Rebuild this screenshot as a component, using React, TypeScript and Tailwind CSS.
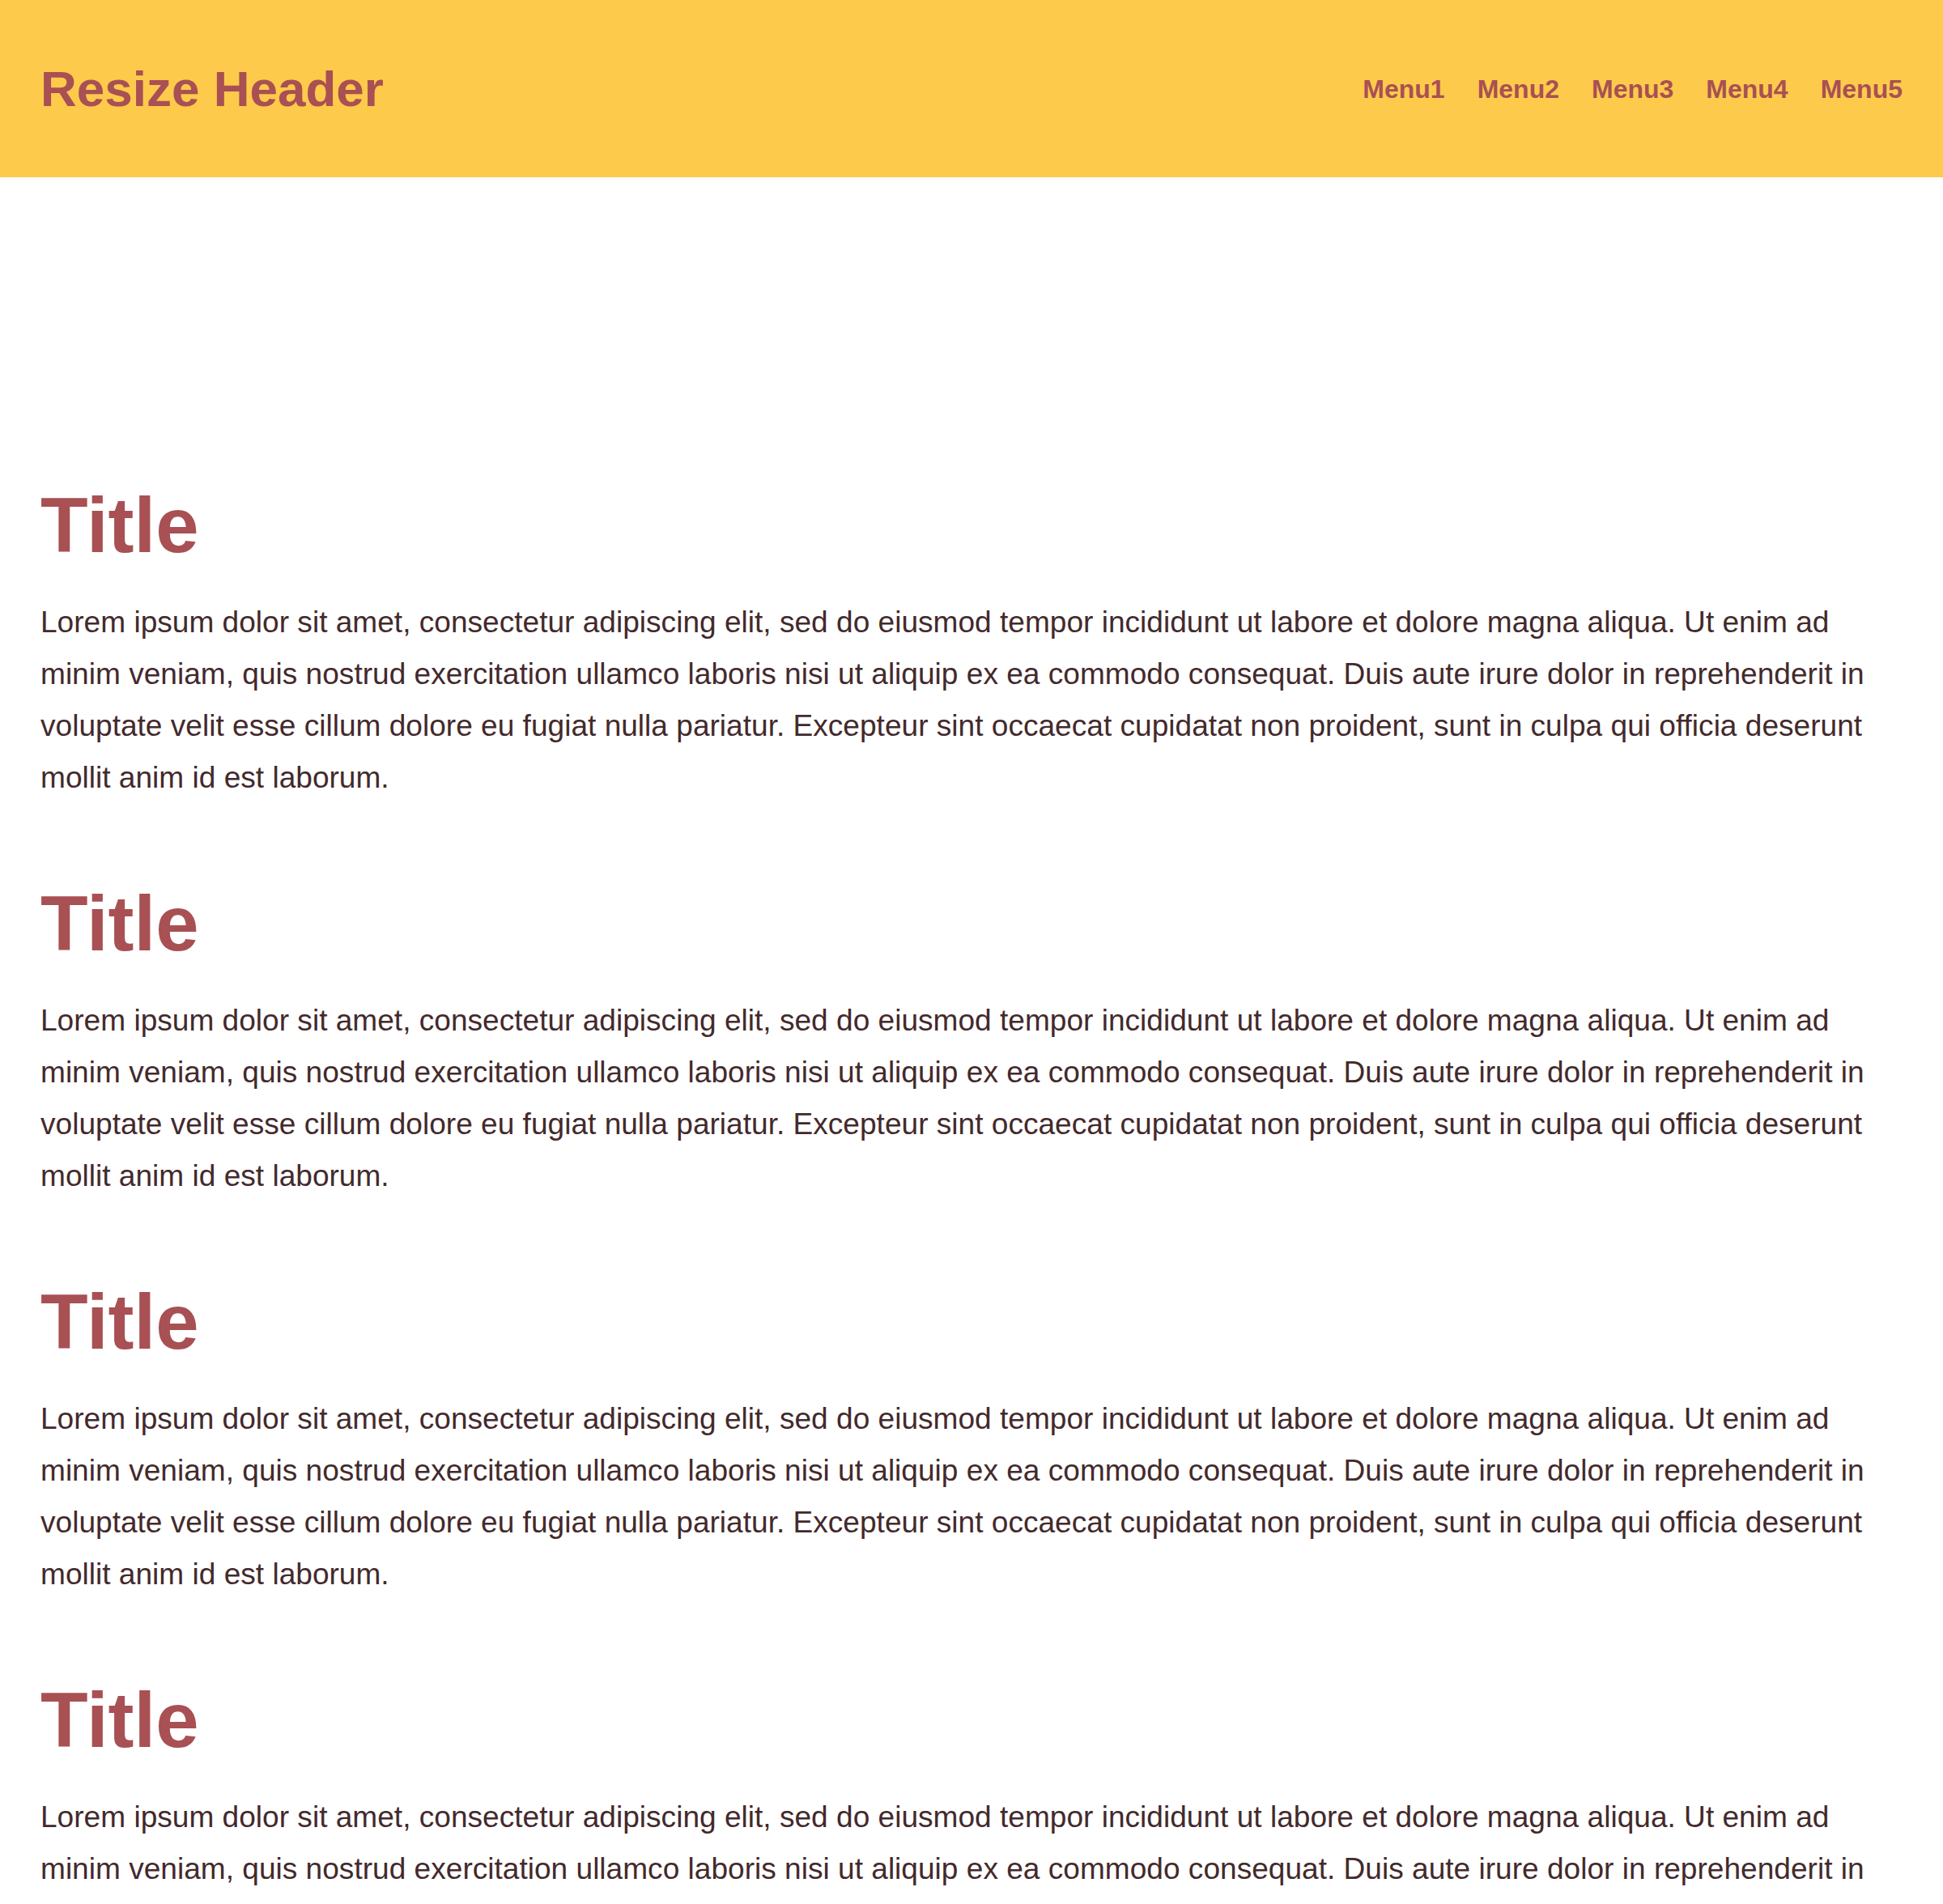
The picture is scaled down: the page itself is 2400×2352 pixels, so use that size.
const menus = ['Menu1', 'Menu2', 'Menu3', 'Menu4', 'Menu5']

const lorem =
  'Lorem ipsum dolor sit amet, consectetur adipiscing elit, sed do eiusmod tempor incididunt ut labore et dolore magna aliqua. Ut enim ad minim veniam, quis nostrud exercitation ullamco laboris nisi ut aliquip ex ea commodo consequat. Duis aute irure dolor in reprehenderit in voluptate velit esse cillum dolore eu fugiat nulla pariatur. Excepteur sint occaecat cupidatat non proident, sunt in culpa qui officia deserunt mollit anim id est laborum.'

function Header() {
  return (
    <header className="h-[219px] bg-[#fdca4b] px-[50px] flex items-center justify-between">
      <h1 className="text-[62px] leading-none font-bold text-[#a85053]">Resize Header</h1>
      <nav className="flex gap-[40px]">
        {menus.map((m) => (
          <a key={m} className="text-[32px] leading-none font-bold text-[#a85053]">
            {m}
          </a>
        ))}
      </nav>
    </header>
  )
}

function Section() {
  return (
    <section>
      <h2 className="text-[96px] leading-none font-bold text-[#a85053] mb-[39px]">Title</h2>
      <p className="text-[37.1px] leading-[64px] text-[#432a2c]">{lorem}</p>
    </section>
  )
}

export default function App() {
  return (
    <div className="min-h-screen bg-white font-['Liberation_Sans',Arial,sans-serif]">
      <Header />
      <main className="px-[50px] pt-[382px] pb-[100px] flex flex-col gap-[101px]">
        {[0, 1, 2, 3, 4].map((i) => (
          <Section key={i} />
        ))}
      </main>
    </div>
  )
}
